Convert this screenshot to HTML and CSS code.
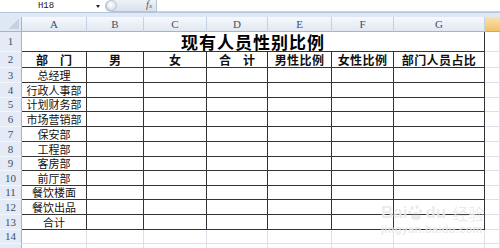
FILE: index.html
```html
<!DOCTYPE html>
<html>
  <head>
    <title>现有人员性别比例</title>
    <link rel="stylesheet" href="styles.css">
  </head>
  <body>
    <div class="formulaBar">
      <div class="nameBox">
        <span class="nameText">H18</span>
        <span class="nameArrow"></span>
      </div>
      <div class="fxPill">
        <span class="fxKnob"></span>
        <span class="fxText">f<small>x</small></span>
      </div>
      <div class="formulaInput"></div>
    </div>
    <div class="band"></div>

    <div class="sheet">
      <!-- column headers -->
      <div class="corner"></div>
      <div class="ch">A</div>
      <div class="ch">B</div>
      <div class="ch">C</div>
      <div class="ch">D</div>
      <div class="ch">E</div>
      <div class="ch">F</div>
      <div class="ch">G</div>
      <div class="ch selCol"></div>

      <!-- row 1 title -->
      <div class="rh">1</div>
      <div class="titleCell">现有人员性别比例</div>
      <div class="c"></div>

      <!-- row 2 heads -->
      <div class="rh">2</div>
      <div class="c t hd">部　门</div>
      <div class="c t hd">男</div>
      <div class="c t hd">女</div>
      <div class="c t hd">合　计</div>
      <div class="c t hd sp">男性比例</div>
      <div class="c t hd sp">女性比例</div>
      <div class="c t hd sp">部门人员占比</div>
      <div class="c"></div>

      <div class="rh">3</div>
      <div class="c t nm">总经理</div>
      <div class="c t"></div><div class="c t"></div><div class="c t"></div><div class="c t"></div><div class="c t"></div><div class="c t"></div>
      <div class="c"></div>

      <div class="rh">4</div>
      <div class="c t nm">行政人事部</div>
      <div class="c t"></div><div class="c t"></div><div class="c t"></div><div class="c t"></div><div class="c t"></div><div class="c t"></div>
      <div class="c"></div>

      <div class="rh">5</div>
      <div class="c t nm">计划财务部</div>
      <div class="c t"></div><div class="c t"></div><div class="c t"></div><div class="c t"></div><div class="c t"></div><div class="c t"></div>
      <div class="c"></div>

      <div class="rh">6</div>
      <div class="c t nm">市场营销部</div>
      <div class="c t"></div><div class="c t"></div><div class="c t"></div><div class="c t"></div><div class="c t"></div><div class="c t"></div>
      <div class="c"></div>

      <div class="rh">7</div>
      <div class="c t nm">保安部</div>
      <div class="c t"></div><div class="c t"></div><div class="c t"></div><div class="c t"></div><div class="c t"></div><div class="c t"></div>
      <div class="c"></div>

      <div class="rh">8</div>
      <div class="c t nm">工程部</div>
      <div class="c t"></div><div class="c t"></div><div class="c t"></div><div class="c t"></div><div class="c t"></div><div class="c t"></div>
      <div class="c"></div>

      <div class="rh">9</div>
      <div class="c t nm">客房部</div>
      <div class="c t"></div><div class="c t"></div><div class="c t"></div><div class="c t"></div><div class="c t"></div><div class="c t"></div>
      <div class="c"></div>

      <div class="rh">10</div>
      <div class="c t nm">前厅部</div>
      <div class="c t"></div><div class="c t"></div><div class="c t"></div><div class="c t"></div><div class="c t"></div><div class="c t"></div>
      <div class="c"></div>

      <div class="rh">11</div>
      <div class="c t nm">餐饮楼面</div>
      <div class="c t"></div><div class="c t"></div><div class="c t"></div><div class="c t"></div><div class="c t"></div><div class="c t"></div>
      <div class="c"></div>

      <div class="rh">12</div>
      <div class="c t nm">餐饮出品</div>
      <div class="c t"></div><div class="c t"></div><div class="c t"></div><div class="c t"></div><div class="c t"></div><div class="c t"></div>
      <div class="c"></div>

      <div class="rh">13</div>
      <div class="c t nm">合计</div>
      <div class="c t"></div><div class="c t"></div><div class="c t"></div><div class="c t"></div><div class="c t"></div><div class="c t"></div>
      <div class="c"></div>

      <div class="rh">14</div>
      <div class="c"></div><div class="c"></div><div class="c"></div><div class="c"></div><div class="c"></div><div class="c"></div><div class="c"></div><div class="c"></div>

      <div class="rh"></div>
      <div class="c"></div><div class="c"></div><div class="c"></div><div class="c"></div><div class="c"></div><div class="c"></div><div class="c"></div><div class="c"></div>
    </div>

    <!-- watermark over the sheet -->
    <div class="watermark">
      <div class="wmTop">
        <span class="wmBai">Bai</span>
        <svg class="wmPaw" width="16" height="16" viewBox="0 0 16 16">
          <ellipse cx="4" cy="3" rx="1.6" ry="2" />
          <ellipse cx="9" cy="2" rx="1.6" ry="2" />
          <ellipse cx="1.8" cy="7.5" rx="1.5" ry="1.9" />
          <ellipse cx="12.5" cy="6" rx="1.5" ry="1.9" />
          <path d="M3 13 C3 9 6 7 8 7 C10 7 13 10 12.5 13 C12 15.5 4 15.5 3 13 Z" />
        </svg>
        <span class="wmDu">du</span>
        <span class="wmJy">经验</span>
      </div>
      <div class="wmUrl">jingyan.baidu.com</div>
    </div>
  </body>
</html>
```

FILE: styles.css
```css
  body {
    margin: 0;
    width: 500px;
    height: 248px;
    overflow: hidden;
    background-color: white;
    font-family: "Noto Sans CJK SC", sans-serif;
  }

  /* formula bar on top */
  .formulaBar {
    display: flex;
    height: 12px;
    background-color: white;
  }

  .nameBox {
    width: 101px;
    display: flex;
    align-items: center;
  }

  .nameText {
    width: 92px;
    text-align: center;
    font-family: "Liberation Mono", monospace;
    font-size: 9px;
    line-height: 12px;
    color: #222;
  }

  .nameArrow {
    width: 0;
    height: 0;
    margin-left: 4px;
    border-left: 2.5px solid transparent;
    border-right: 2.5px solid transparent;
    border-top: 3px solid #222;
  }

  .fxPill {
    width: 51px;
    margin-left: 4px;
    display: flex;
    align-items: center;
    justify-content: space-between;
    border-radius: 6px 0 0 6px;
    background: linear-gradient(#eef2f7, #d9e1ec);
    border: 1px solid #b5c3d5;
    border-right: none;
    border-top: none;
    box-sizing: border-box;
  }

  .fxKnob {
    width: 11px;
    height: 11px;
    border-radius: 50%;
    background: radial-gradient(circle at 40% 40%, #ffffff, #cdd7e4);
    border: 1px solid #b5c3d5;
    box-sizing: border-box;
  }

  .fxText {
    font-family: "Liberation Serif", serif;
    font-style: italic;
    font-size: 10px;
    line-height: 11px;
    color: #555;
    margin-right: 4px;
  }

  .fxText small {
    font-size: 7px;
  }

  .formulaInput {
    flex: 1;
    border-left: 1px solid #b5c3d5;
    border-bottom: 1px solid #c9d4e2;
    background-color: white;
  }

  .band {
    height: 4px;
    border-top: 1px solid #b7c6da;
    background-color: #dfe8f5;
  }

  /* the grid */
  .sheet {
    display: grid;
    grid-template-columns: 22px 65px 57px 63px 61px 64px 62px 91px 15px;
    grid-template-rows: 15px 20px 16px 15px 15px 14px 15px 15px 15px 14px 15px 14px 15px 15px 14px 14px;
    line-height: 1;
  }

  .sheet > div {
    box-sizing: border-box;
  }

  .corner {
    background-color: #dfe7f2;
    border-right: 1px solid #9eb6ce;
    border-bottom: 1px solid #9eb6ce;
    position: relative;
  }

  .corner::after {
    content: "";
    position: absolute;
    right: 2px;
    bottom: 2px;
    width: 10px;
    height: 10px;
    background: linear-gradient(135deg, transparent 50%, #c3d1e2 50%);
  }

  .ch {
    background: linear-gradient(#f6f9fc, #e1e8f2);
    border-right: 1px solid #c4d1e2;
    border-bottom: 1px solid #9eb6ce;
    display: flex;
    justify-content: center;
    align-items: center;
    font-family: "Liberation Serif", serif;
    font-size: 11px;
    color: #3d4f68;
  }

  .selCol {
    background: linear-gradient(#fbe1ae, #f2c369);
    border-right: none;
    border-bottom: 1px solid #e0a64a;
  }

  .rh {
    background-color: #e4ebf6;
    border-right: 1px solid #9eb6ce;
    border-bottom: 1px solid #f3f6fa;
    display: flex;
    justify-content: center;
    align-items: center;
    font-family: "Liberation Serif", serif;
    font-size: 11px;
    color: #3d4f68;
  }

  .c {
    border-right: 1px solid #dae1ec;
    border-bottom: 1px solid #dae1ec;
    display: flex;
    justify-content: center;
    align-items: center;
    color: #111;
  }

  .c.t {
    border-right-color: #333;
    border-bottom-color: #333;
  }

  .titleCell {
    grid-column: 2 / 9;
    border-right: 1px solid #333;
    border-bottom: 1px solid #333;
    display: flex;
    justify-content: center;
    align-items: center;
    font-size: 17px;
    letter-spacing: 1px;
    font-weight: bold;
    color: #000;
  }

  .hd {
    font-size: 12px;
    font-weight: bold;
  }

  .sp {
    letter-spacing: 0.4px;
  }

  .nm {
    font-size: 11px;
  }

  /* baidu watermark */
  .watermark {
    position: absolute;
    left: 381px;
    top: 203px;
    color: rgba(185, 185, 185, 0.3);
    text-shadow: 0 0 1px rgba(255, 255, 255, 0.9);
  }

  .wmTop {
    display: flex;
    align-items: center;
    height: 20px;
  }

  .wmBai, .wmDu {
    font-family: "Liberation Sans", sans-serif;
    font-weight: bold;
    font-size: 17px;
  }

  .wmPaw {
    fill: rgba(185, 185, 185, 0.3);
    margin: 0 1px;
  }

  .wmJy {
    font-size: 16px;
    margin-left: 6px;
  }

  .wmUrl {
    font-family: "Liberation Sans", sans-serif;
    font-size: 11px;
    font-weight: bold;
    letter-spacing: 0.3px;
  }
```
